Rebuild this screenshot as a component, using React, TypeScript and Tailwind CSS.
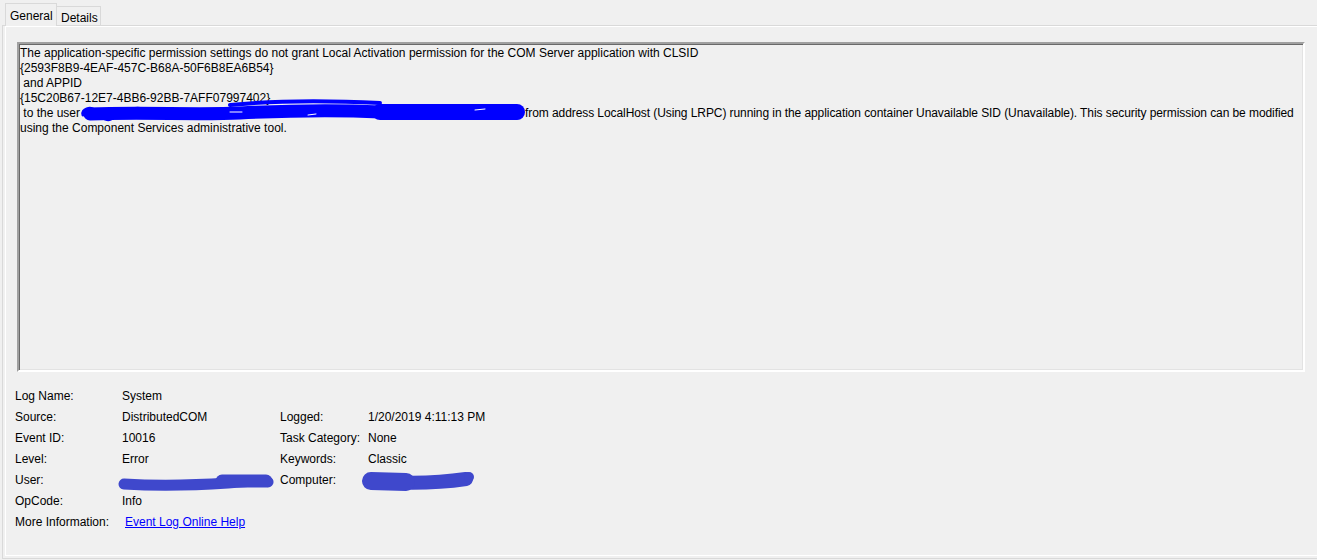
import React from "react";

const Scribble = () => (
  <svg
    className="absolute left-0 top-[-7px]"
    width="445"
    height="26"
    viewBox="0 0 445 26"
    fill="none"
  >
    <g stroke="#0000ff" strokeLinecap="round" strokeLinejoin="round">
      <path d="M10 15 C60 13 120 16 160 14 C200 12 260 11 300 13 C360 15 400 14 437 14" strokeWidth="13" />
      <path d="M300 13 L437 13" strokeWidth="16" />
      <path d="M3 16 c-2 -6 8 -9 12 -4 c3 5 -8 9 -9 3 M18 17 c4 -8 16 -6 15 0 c-1 6 -12 4 -10 -2 M50 13 c4 -5 12 -5 14 0" strokeWidth="3" />
      <path d="M150 6 C190 2 240 1 300 4" strokeWidth="4" />
    </g>
    <g stroke="#ffffff" strokeLinecap="round" strokeWidth="1">
      <path d="M150 13 L162 13 M228 16 L236 15 M395 11 L405 10" />
    </g>
  </svg>
);

const UserScribble = () => (
  <svg className="absolute left-[-4px] top-[2px]" width="160" height="20" viewBox="0 0 160 20" fill="none">
    <g stroke="#3f48cc" strokeLinecap="round">
      <path d="M6 12 C40 14 80 13 110 11 C130 9 145 8 150 10" strokeWidth="11" />
      <path d="M104 9 L148 9" strokeWidth="13" />
    </g>
  </svg>
);

const ComputerScribble = () => (
  <svg className="absolute left-[-6px] top-0" width="120" height="22" viewBox="0 0 120 22" fill="none">
    <g stroke="#3f48cc" strokeLinecap="round">
      <path d="M10 11 C34 13 70 14 104 9" strokeWidth="14" />
      <path d="M9 11 L44 12" strokeWidth="18" />
    </g>
    <circle cx="107" cy="7" r="5" fill="#3f48cc" />
  </svg>
);

const lines = [
  "The application-specific permission settings do not grant Local Activation permission for the COM Server application with CLSID",
  "{2593F8B9-4EAF-457C-B68A-50F6B8EA6B54}",
  " and APPID",
  "{15C20B67-12E7-4BB6-92BB-7AFF07997402}",
];

type Field = { label: string; value?: React.ReactNode; label2?: string; value2?: React.ReactNode };

const fields: Field[] = [
  { label: "Log Name:", value: "System" },
  { label: "Source:", value: "DistributedCOM", label2: "Logged:", value2: "1/20/2019 4:11:13 PM" },
  { label: "Event ID:", value: "10016", label2: "Task Category:", value2: "None" },
  { label: "Level:", value: "Error", label2: "Keywords:", value2: "Classic" },
  { label: "User:", value: <UserScribble />, label2: "Computer:", value2: <ComputerScribble /> },
  { label: "OpCode:", value: "Info" },
  {
    label: "More Information:",
    value: <span className="ml-[3px] text-[#0000ff] underline">Event Log Online Help</span>,
  },
];

export default function App() {
  return (
    <div className="h-[560px] w-[1317px] overflow-hidden bg-[#f0f0f0] font-['Liberation_Sans',Arial,sans-serif] text-[12px] text-black">
      {/* tabs */}
      <div className="flex h-[25px] items-end pl-[5px]">
        <div className="relative z-10 -mb-px h-[23px] w-[52px] border border-b-0 border-[#d9d9d9] bg-[#f0f0f0] pl-[4px] pt-[3px]">
          General
        </div>
        <div className="h-[19px] w-[44px] border border-b-0 border-l-0 border-[#d9d9d9] bg-[#f0f0f0] pl-[4px] pt-[2px]">
          Details
        </div>
      </div>

      {/* tab panel */}
      <div className="ml-[2px] h-[534px] border-y border-l border-[#d9d9d9]">
        <div className="ml-[2px] h-[530px] border-y border-l border-white pl-[11px] pt-[15px]">
          <div className="h-[330px] w-[1288px] border-2 border-b-white border-l-[#a0a0a0] border-r-white border-t-[#a0a0a0] pl-px pt-[2px] leading-[15px] shadow-[inset_1px_1px_0_#696969,inset_-1px_-1px_0_#e3e3e3]">
            {lines.map((l) => (
              <div key={l} className="whitespace-pre">
                {l}
              </div>
            ))}
            <div className="whitespace-pre">
              {" to the user"}
              <span className="relative inline-block h-[15px] w-[445px] align-top">
                <Scribble />
              </span>
              <span className="tracking-[-0.08px]">
                {"from address LocalHost (Using LRPC) running in the application container Unavailable SID (Unavailable). This security permission can be modified"}
              </span>
            </div>
            <div className="whitespace-pre">using the Component Services administrative tool.</div>
          </div>

          <div className="-ml-[2px] mt-[14px] grid grid-cols-[107px_158px_88px_1fr] leading-[21px]">
            {fields.map((f) => (
              <React.Fragment key={f.label}>
                <div>{f.label}</div>
                <div className="relative h-[21px] whitespace-nowrap">{f.value}</div>
                <div>{f.label2}</div>
                <div className="relative h-[21px] whitespace-nowrap">{f.value2}</div>
              </React.Fragment>
            ))}
          </div>
        </div>
      </div>
    </div>
  );
}
